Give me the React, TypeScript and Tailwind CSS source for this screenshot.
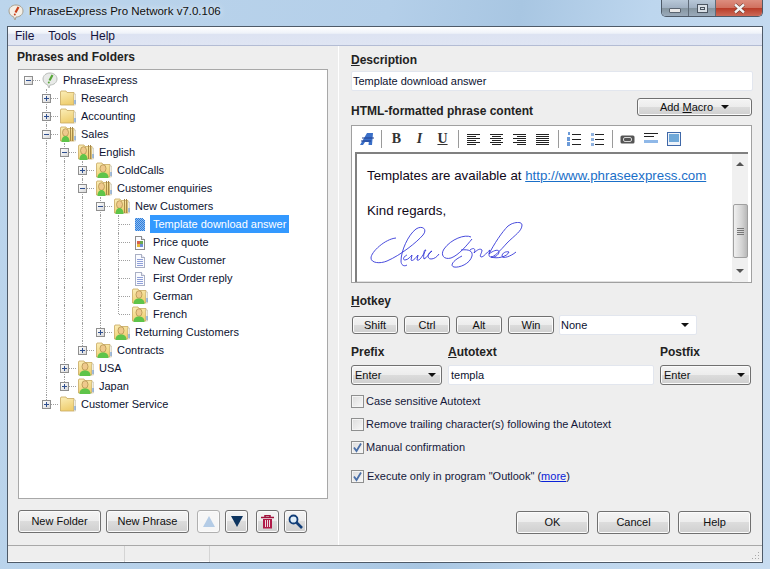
import React from 'react';

type TreeNode = {
  label: string;
  icon: 'logo' | 'folder' | 'open' | 'user' | 'doc' | 'docOn' | 'docColor';
  state?: 'plus' | 'minus';
  selected?: boolean;
  children?: TreeNode[];
};

const tree: TreeNode = {
  label: 'PhraseExpress', icon: 'logo', state: 'minus', children: [
    { label: 'Research', icon: 'folder', state: 'plus' },
    { label: 'Accounting', icon: 'folder', state: 'plus' },
    {
      label: 'Sales', icon: 'open', state: 'minus', children: [
        {
          label: 'English', icon: 'open', state: 'minus', children: [
            { label: 'ColdCalls', icon: 'user', state: 'plus' },
            {
              label: 'Customer enquiries', icon: 'open', state: 'minus', children: [
                {
                  label: 'New Customers', icon: 'open', state: 'minus', children: [
                    { label: 'Template download answer', icon: 'docOn', selected: true },
                    { label: 'Price quote', icon: 'docColor' },
                    { label: 'New Customer', icon: 'doc' },
                    { label: 'First Order reply', icon: 'doc' },
                    { label: 'German', icon: 'user' },
                    { label: 'French', icon: 'user' },
                  ],
                },
                { label: 'Returning Customers', icon: 'user', state: 'plus' },
              ],
            },
            { label: 'Contracts', icon: 'user', state: 'plus' },
          ],
        },
        { label: 'USA', icon: 'user', state: 'plus' },
        { label: 'Japan', icon: 'user', state: 'plus' },
      ],
    },
    { label: 'Customer Service', icon: 'folder', state: 'plus' },
  ],
};

const RowIcon = ({ kind }: { kind: TreeNode['icon'] }) => {
  if (kind === 'logo') {
    return (
      <svg width="16" height="17" viewBox="0 0 16 17">
        <path d="M8 1c4 0 7 2.600 7 6s-3 6-7 6l-1 3-1.500-3.300C3 12 1 10 1 7c0-3.400 3-6 7-6z" fill="#e8eae8" stroke="#b8bcb8" />
        <path d="M10.500 3 7.500 8.500" stroke="#58a63a" strokeWidth="2.200" />
        <circle cx="6.800" cy="10.600" r="1" fill="#58a63a" />
      </svg>
    );
  }
  if (kind === 'doc' || kind === 'docOn' || kind === 'docColor') {
    return (
      <svg width="16" height="16" viewBox="0 0 16 16" shapeRendering="crispEdges">
        <defs>
          <pattern id="chk" width="2" height="2" patternUnits="userSpaceOnUse">
            <rect width="2" height="2" fill="#8fbcf0" />
            <rect width="1" height="1" fill="#2f7fdc" />
            <rect x="1" y="1" width="1" height="1" fill="#2f7fdc" />
          </pattern>
        </defs>
        {kind === 'docOn' ? (
          <path d="M3 2h7l3 3v10H3z" fill="url(#chk)" />
        ) : (
          <>
            <path d="M3.500 2.500h6l3 3v10h-9z" fill="#fafbff" stroke={kind === 'doc' ? '#aab0c4' : '#8c8c8c'} />
            <path d="M9.500 2.500v3h3" fill="#e4e4ee" stroke={kind === 'doc' ? '#aab0c4' : '#8c8c8c'} />
          </>
        )}
        {kind === 'doc' && (
          <path d="M5 7h6M5 9h6M5 11h6M5 13h6" stroke="#8f9fd8" />
        )}
        {kind === 'docColor' && (
          <>
            <rect x="5" y="7" width="3" height="3" fill="#d8614a" />
            <rect x="8" y="7" width="3" height="3" fill="#6aa84f" />
            <rect x="5" y="10" width="3" height="3" fill="#e6b93c" />
            <rect x="8" y="10" width="3" height="3" fill="#6f8fd8" />
          </>
        )}
      </svg>
    );
  }
  return (
    <svg width="16" height="16" viewBox="0 0 16 16">
      <defs>
        <linearGradient id="fold" x1="0" y1="0" x2="0.300" y2="1">
          <stop offset="0" stopColor="#fbeeb8" />
          <stop offset="1" stopColor="#efcf72" />
        </linearGradient>
      </defs>
      <path d="M0.500 2V15H14V2.500H7L6 1H1z" fill="url(#fold)" stroke="#c8a860" strokeWidth="0.800" />
      <path d="M14 4h1.500v11H14z" fill="#fff" stroke="#b8b090" strokeWidth="0.500" />
      <path d="M15 10v4" stroke="#5a90d8" />
      {kind === 'open' && <path d="M10.500 1v14M12.500 1v14" stroke="#a88a48" strokeWidth="1" />}
      {(kind === 'open' || kind === 'user') && (
        <>
          <ellipse cx={kind === 'open' ? 5.500 : 7} cy="6.500" rx="3" ry="3.800" fill="#efc98c" stroke="#a0803c" strokeWidth="0.600" />
          <path d={kind === 'open' ? 'M1.500 16c0-4 1.800-6 4-6s4 2 4 6z' : 'M1.500 16c0-4 2.200-5.500 5.500-5.500s5.500 1.500 5.500 5.500z'} fill="#5fc44a" />
        </>
      )}
    </svg>
  );
};

const Expander = ({ state }: { state: 'plus' | 'minus' }) => (
  <span className="relative z-10 flex h-[9px] w-[9px] items-center justify-center border border-[#8f8f8f] bg-[linear-gradient(135deg,#ffffff,#d8d8d8)]">
    <span className="absolute h-px w-[5px] bg-[#2f4f8f]" />
    {state === 'plus' && <span className="absolute h-[5px] w-px bg-[#2f4f8f]" />}
  </span>
);

const rowsOf = (node: TreeNode, depth: number, guides: boolean[], last: boolean): React.ReactNode[] => {
  const row = (
    <div key={node.label} className="flex h-[18px] items-center">
      {guides.map((on, i) => (
        <span key={i} className="flex h-full w-[18px] justify-center">
          {on && <span className="h-full border-l border-dotted border-[#a0a0a0]" />}
        </span>
      ))}
      <span className="relative flex h-full w-[18px] items-center justify-center">
        {depth > 0 && <span className={`absolute left-[9px] top-0 border-l border-dotted border-[#a0a0a0] ${last ? 'h-[9px]' : 'h-full'}`} />}
        <span className="absolute left-[10px] top-[9px] w-[11px] border-t border-dotted border-[#a0a0a0]" />
        {node.state && <Expander state={node.state} />}
      </span>
      <span className="ml-[5px] flex w-[16px] items-center justify-center"><RowIcon kind={node.icon} /></span>
      <span className={`ml-[2px] flex h-[18px] items-center whitespace-nowrap px-[3px] ${node.selected ? 'bg-[#3399ff] text-white' : 'text-[#0c1230]'}`}>
        {node.label}
      </span>
    </div>
  );
  const kids = node.children ?? [];
  return [
    row,
    ...kids.flatMap((kid, i) => rowsOf(kid, depth + 1, [...guides, !last], i === kids.length - 1)),
  ];
};

const face = 'rounded-[3px] border border-[#707070] bg-[linear-gradient(#f4f4f4_0%,#ececec_50%,#dcdcdc_50%,#cfcfcf_100%)] shadow-[inset_0_0_0_1px_#fbfbfb] text-[#101010]';
const heading = 'text-[12px] font-bold text-[#222]';

const Btn = ({ className, children }: { className: string; children: React.ReactNode }) => (
  <div className={`flex items-center justify-center ${face} ${className}`}>{children}</div>
);

const Arrow = () => (
  <span className="h-0 w-0 border-x-[4px] border-t-[4px] border-x-transparent border-t-[#111]" />
);

const Check = ({ on, label, gap = 'gap-[2px]' }: { on?: boolean; label: React.ReactNode; gap?: string }) => (
  <div className={`flex h-4 items-center ${gap}`}>
    <span className="flex h-[13px] w-[13px] items-center justify-center border border-[#8e8f8f] bg-[linear-gradient(135deg,#dcdcdc,#f8f8f8)] shadow-[inset_0_0_0_1px_#f4f4f4]">
      {on && (
        <svg width="11" height="11" viewBox="0 0 11 11">
          <path d="M2 5.500 4.500 9 9 1.500" fill="none" stroke="#4a6fa8" strokeWidth="1.800" />
        </svg>
      )}
    </span>
    <span className="whitespace-nowrap text-[#14183a]">{label}</span>
  </div>
);

const ComboBtn = ({ w, text }: { w: string; text: string }) => (
  <div className={`flex items-center justify-between ${face} ${w} h-5 pl-[3px] pr-[5px]`}>
    <span>{text}</span>
    <Arrow />
  </div>
);

const Align = ({ lines }: { lines: [number, number][] }) => (
  <svg width="13" height="12" viewBox="0 0 13 12" shapeRendering="crispEdges">
    {lines.map(([x, w], i) => (
      <rect key={i} x={x} y={i * 2 + 1} width={w} height="1" fill="#222" />
    ))}
  </svg>
);

const Sep = () => (
  <span className="flex w-[8px] justify-center"><span className="h-[18px] w-px bg-[#9a9a9a]" /></span>
);

const Tool = ({ children }: { children: React.ReactNode }) => (
  <span className="flex h-full w-[23px] items-center justify-center">{children}</span>
);

const toolSerif = 'font-["Liberation_Serif",serif] text-[14px] font-bold text-[#333] leading-none';

const Toolbar = () => (
  <div className="flex h-[26px] items-center pl-[5px]">
    <span className="flex h-full w-[20px] items-center justify-center">
      <svg width="16" height="14" viewBox="0 0 16 14">
        <path d="M1 13 8 1h6l-1 12H9.500l.3-3H6l-2 3z" fill="#3a6fc8" />
        <path d="M3 6h12M2 9h10" stroke="#1f3f90" strokeWidth="1" />
      </svg>
    </span>
    <Sep />
    <Tool><span className={toolSerif}>B</span></Tool>
    <Tool><span className={`${toolSerif} italic`}>I</span></Tool>
    <Tool><span className={`${toolSerif} underline`}>U</span></Tool>
    <Sep />
    <Tool><Align lines={[[0, 13], [0, 9], [0, 13], [0, 9], [0, 13], [0, 9]]} /></Tool>
    <Tool><Align lines={[[0, 13], [2, 9], [0, 13], [2, 9], [0, 13], [2, 9]]} /></Tool>
    <Tool><Align lines={[[0, 13], [4, 9], [0, 13], [4, 9], [0, 13], [4, 9]]} /></Tool>
    <Tool><Align lines={[[0, 13], [0, 13], [0, 13], [0, 13], [0, 13], [0, 13]]} /></Tool>
    <Sep />
    <Tool>
      <svg width="14" height="14" viewBox="0 0 14 14" shapeRendering="crispEdges">
        <path d="M1 0h2v3H1zM0 5h3v4H0zM0 10h3v4H0z" fill="#6b9ad8" />
        <path d="M5 2h9v1H5zM5 7h9v1H5zM5 12h9v1H5z" fill="#222" />
      </svg>
    </Tool>
    <Tool>
      <svg width="14" height="14" viewBox="0 0 14 14" shapeRendering="crispEdges">
        <path d="M1 1h3v3H1zM1 6h3v3H1zM1 11h3v3H1z" fill="#8fb2e0" />
        <path d="M5 2h9v1H5zM5 7h9v1H5zM5 12h9v1H5z" fill="#222" />
      </svg>
    </Tool>
    <Sep />
    <Tool>
      <svg width="15" height="9" viewBox="0 0 15 9">
        <rect x="0.500" y="0.500" width="14" height="8" rx="1.500" fill="#555" />
        <rect x="3.500" y="2.500" width="8" height="4" rx="1.500" fill="none" stroke="#d8d8d8" />
      </svg>
    </Tool>
    <Tool>
      <svg width="14" height="12" viewBox="0 0 14 12" shapeRendering="crispEdges">
        <path d="M0 0h14v1H0zM0 3h10v1H0z" fill="#222" />
        <path d="M0 7h14v3H0z" fill="#8fb8e8" />
      </svg>
    </Tool>
    <Tool>
      <svg width="14" height="14" viewBox="0 0 14 14" shapeRendering="crispEdges">
        <rect x="0.500" y="0.500" width="13" height="13" fill="#eef3fa" stroke="#3f68a8" />
        <rect x="2" y="2" width="10" height="8" fill="#6fa8d8" />
      </svg>
    </Tool>
  </div>
);

const Signature = () => (
  <svg width="156" height="50" viewBox="0 0 156 50" className="ml-[2px] mt-[3px]" fill="none" stroke="#3438d8" strokeWidth="0.900">
    <path d="M27 16C16 17 2 30 2 36c0 5 9 6 16 3C32 33 48 20 54 13c5-6-1-10-7-6-8 6-15 22-15 32 0 4 3 6 6 4" />
    <path d="M38 33c-3 1-5 5-2 5 3 0 6-4 7-5l-1 5c1 2 5-2 7-5l-1 5c2 1 4-2 6-5 2-3 0-5 3-5-2 2-3 6-2 9 3-1 5-6 8-8-5 2-5 8-1 8 3 0 6-2 8-5" />
    <path d="M102 15C96 12 82 17 75 27c-4 6 0 11 7 9 8-3 16-13 21-19M92 28c8-1 12 1 11 6-2 8-13 12-18 11-4-1-2-6 8-11" />
    <path d="M101 28c4-3 6-1 4 3 3-3 6-5 8-3 0 3-3 6-1 7 3 0 6-5 9-7-1 3-2 7 1 7 3 0 9-6 16-14 8-8 15-12 15-18 0-4-9-3-14 1-6 6-14 18-19 28 5-4 10-5 10-2 0 3-5 6-8 5 6 2 16 0 18-5-3-1-7 1-7 4 0 3 8 1 14-4" />
  </svg>
);

const ScrollBar = () => (
  <div className="flex w-[16px] flex-col items-center bg-[#f0f0f0]">
    <span className="mt-[8px] h-0 w-0 border-x-[4px] border-b-[4px] border-x-transparent border-b-[#555]" />
    <div className="mt-[38px] flex h-[54px] w-[15px] flex-col items-center justify-center gap-px rounded-[2px] border border-[#a0a0a0] bg-[linear-gradient(90deg,#f0f0f0,#d4d4d4_60%,#b8b8b8)]">
      <span className="h-px w-[7px] bg-[#777]" />
      <span className="h-px w-[7px] bg-[#777]" />
      <span className="h-px w-[7px] bg-[#777]" />
      <span className="h-px w-[7px] bg-[#777]" />
    </div>
    <span className="mt-[11px] h-0 w-0 border-x-[4px] border-t-[4px] border-x-transparent border-t-[#555]" />
  </div>
);

const App = () => (
  <div className='flex h-[569px] w-[770px] flex-col overflow-hidden bg-[linear-gradient(100deg,#bcd5ec_0%,#b4cfe9_45%,#a8c6e2_60%,#bdd6ee_75%,#c8dcf0_100%)] font-["Liberation_Sans",sans-serif] text-[11px] leading-none'>
    <div className="flex h-[26px] shrink-0 items-start">
      <svg width="16" height="17" viewBox="0 0 16 17" className="ml-2 mt-[4px]">
        <path d="M8 1c4 0 7 2.600 7 6s-3 6-7 6l-1 3-1.500-3.300C3 12 1 10 1 7c0-3.400 3-6 7-6z" fill="#f4efe6" stroke="#a8a090" />
        <path d="M10.500 3 7.500 8.500" stroke="#c8401c" strokeWidth="2.200" />
        <circle cx="6.800" cy="10.600" r="1" fill="#c8401c" />
      </svg>
      <span className="ml-[5px] mt-[6px] text-[11.5px] text-[#101010] [text-shadow:0_0_6px_#ffffff]">PhraseExpress Pro Network v7.0.106</span>
      <div className="ml-auto mr-[7px] flex h-[17px] overflow-hidden rounded-b-[5px] border border-t-0 border-[#4e5a68]">
        <span className="flex w-[27px] items-end justify-center border-r border-[#5f6b78] bg-[linear-gradient(#b8c8d8,#a0b0c2_50%,#84949f_50%,#9aaabb)] pb-[3px]">
          <span className="h-[5px] w-[12px] rounded-[1px] border border-[#5a6470] bg-[#e8e8e8]" />
        </span>
        <span className="flex w-[27px] items-center justify-center border-r border-[#5f6b78] bg-[linear-gradient(#b8c8d8,#a0b0c2_50%,#84949f_50%,#9aaabb)]">
          <span className="flex h-[9px] w-[11px] items-center justify-center border border-[#4a5460] bg-[#d8dfe6]"><span className="h-[3px] w-[5px] border border-[#4a5460]" /></span>
        </span>
        <span className="flex w-[46px] items-center justify-center bg-[linear-gradient(#dc8d7e,#d0705e_50%,#b83a26_50%,#cc6a58)]">
          <svg width="13" height="11" viewBox="0 0 13 11">
            <path d="M2 1.500 11 9.500M11 1.500 2 9.500" stroke="#5a2a20" strokeWidth="3.600" />
            <path d="M2 1.500 11 9.500M11 1.500 2 9.500" stroke="#f4f4f4" strokeWidth="2.400" />
          </svg>
        </span>
      </div>
    </div>

    <div className="mx-[7px] mb-[6px] flex min-h-0 flex-1 flex-col border border-[#4e5a68] bg-[#eeeeee]">
      <div className="flex h-[19px] shrink-0 items-center gap-[14px] border-b border-[#b3bcd4] bg-[linear-gradient(#ffffff_0%,#eef2f9_35%,#dde3f2_40%,#dfe5f3_100%)] pl-[7px] text-[12px] text-[#15133c]">
        <span>File</span>
        <span>Tools</span>
        <span>Help</span>
      </div>

      <div className="flex min-h-0 flex-1">
        <div className="flex w-[331px] shrink-0 flex-col border-r border-white px-[10px] pt-[3px]">
          <div className={`${heading} -ml-px flex h-4 items-center text-[11.5px]`}>Phrases and Folders</div>
          <div className="mt-[4px] h-[430px] border border-[#a8a8a8] bg-white pt-px">
            {rowsOf(tree, 0, [], true)}
          </div>
          <div className="mt-[11px] flex items-center">
            <Btn className="h-[23px] w-[83px]">New Folder</Btn>
            <Btn className="ml-[5px] h-[23px] w-[83px]">New Phrase</Btn>
            <Btn className="ml-[8px] h-[23px] w-[23px] border-[#b0b0b0] bg-none bg-[#f6f6f6]">
              <span className="h-0 w-0 border-x-[6px] border-b-[11px] border-x-transparent border-b-[#b4cce6]" />
            </Btn>
            <Btn className="ml-[5px] h-[23px] w-[23px]">
              <span className="h-0 w-0 border-x-[6px] border-t-[11px] border-x-transparent border-t-[#0e3560]" />
            </Btn>
            <Btn className="ml-[8px] h-[23px] w-[23px]">
              <svg width="13" height="14" viewBox="0 0 13 14">
                <path d="M0 2.500h13M4 2V.500h5V2" fill="none" stroke="#a0123c" strokeWidth="1.500" />
                <path d="M2 4h9v9.500H2z" fill="#b01a48" />
                <path d="M4.500 5v7M6.500 5v7M8.500 5v7" stroke="#f0d8e0" />
              </svg>
            </Btn>
            <Btn className="ml-[5px] h-[23px] w-[23px]">
              <svg width="15" height="15" viewBox="0 0 15 15">
                <circle cx="5.500" cy="5.500" r="4" fill="#e0eef8" stroke="#123e78" strokeWidth="1.800" />
                <path d="M8.500 8.500 14 14" stroke="#123e78" strokeWidth="2.600" />
              </svg>
            </Btn>
          </div>
        </div>

        <div className="flex min-w-0 flex-1 flex-col pb-[11px] pl-[12px]">
          <div className={`${heading} mt-[6px] flex h-4 items-center`}><span><span className="underline">D</span>escription</span></div>
          <div className="mt-[3px] flex h-5 w-[402px] items-center rounded-[2px] border border-[#e2e6ee] bg-white pl-[1px] text-[#0c1230]">Template download answer</div>
          <div className="mt-[7px] flex h-[27px] w-[401px] items-start justify-between">
            <span className={`${heading} mt-[5px] flex h-4 items-center`}>HTML-formatted phrase content</span>
            <Btn className="h-[18px] w-[115px] gap-[8px]"><span>Add <span className="underline">M</span>acro</span><Arrow /></Btn>
          </div>
          <div className="flex h-[158px] w-[401px] flex-col border border-[#a0a0a0] bg-white">
            <Toolbar />
            <div className="mx-[3px] flex min-h-0 flex-1 border-l-2 border-t-2 border-[#808080] shadow-[inset_-1px_-1px_0_#e0e0e0]">
              <div className="flex-1 pl-[10px] pt-[14px] text-[13.3px] text-[#100818]">
                <div className="flex h-4 items-center">Templates are available at&nbsp;<span className="text-[#1a6fc8] underline">http://www.phraseexpress.com</span></div>
                <div className="mt-[19px] flex h-4 items-center">Kind regards,</div>
                <Signature />
              </div>
              <ScrollBar />
            </div>
          </div>

          <div className={`${heading} mt-[10px] flex h-4 items-center`}><span><span className="underline">H</span>otkey</span></div>
          <div className="mt-[6px] flex h-5 items-center pl-px">
            <Btn className="h-[18px] w-[46px]">Shift</Btn>
            <Btn className="ml-[6px] h-[18px] w-[46px]">Ctrl</Btn>
            <Btn className="ml-[6px] h-[18px] w-[46px]">Alt</Btn>
            <Btn className="ml-[6px] h-[18px] w-[46px]">Win</Btn>
            <div className="ml-[5px] flex h-5 w-[138px] items-center justify-between rounded-[2px] border border-[#e2e6ee] bg-white pl-[1px] pr-[7px] text-[#0c1230]">
              <span>None</span>
              <Arrow />
            </div>
          </div>

          <div className={`${heading} mt-[9px] flex h-4 items-center`}>
            <span className="w-[97px]">Prefix</span>
            <span className="w-[212px]"><span className="underline">A</span>utotext</span>
            <span>Postfix</span>
          </div>
          <div className="mt-[5px] flex h-5 items-center">
            <ComboBtn w="w-[91px]" text="Enter" />
            <div className="ml-[6px] flex h-5 w-[206px] items-center rounded-[2px] border border-[#e2e6ee] bg-white pl-[2px] text-[#0c1230]">templa</div>
            <div className="ml-[6px]"><ComboBtn w="w-[91px]" text="Enter" /></div>
          </div>

          <div className="mt-[8px]"><Check label="Case sensitive Autotext" /></div>
          <div className="mt-[7px]"><Check label="Remove trailing character(s) following the Autotext" /></div>
          <div className="mt-[7px]"><Check on label="Manual confirmation" /></div>
          <div className="mt-[13px]">
            <Check on gap="gap-[3px]" label={<>Execute only in program "Outlook" (<span className="text-[#0a22d8] underline">more</span>)</>} />
          </div>

          <div className="mt-auto flex w-[400px] justify-end gap-2">
            <Btn className="h-[23px] w-[73px]">OK</Btn>
            <Btn className="h-[23px] w-[73px]">Cancel</Btn>
            <Btn className="h-[23px] w-[73px]">Help</Btn>
          </div>
        </div>
      </div>

      <div className="flex h-[17px] shrink-0 border-t border-[#a8a8a8] shadow-[inset_0_-1px_0_#ffffff]">
        <span className="w-[117px] border-r border-[#d4d4d4]" />
        <span className="w-[85px] border-r border-[#d4d4d4]" />
        <span className="flex flex-1 items-end justify-end pb-[2px] pr-[2px]">
          <svg width="10" height="10" viewBox="0 0 10 10" shapeRendering="crispEdges">
            <path d="M8 2h1v1H8zM5 5h1v1H5zM8 5h1v1H8zM2 8h1v1H2zM5 8h1v1H5zM8 8h1v1H8z" fill="#a8a8a8" />
          </svg>
        </span>
      </div>
    </div>
  </div>
);

export default App;
